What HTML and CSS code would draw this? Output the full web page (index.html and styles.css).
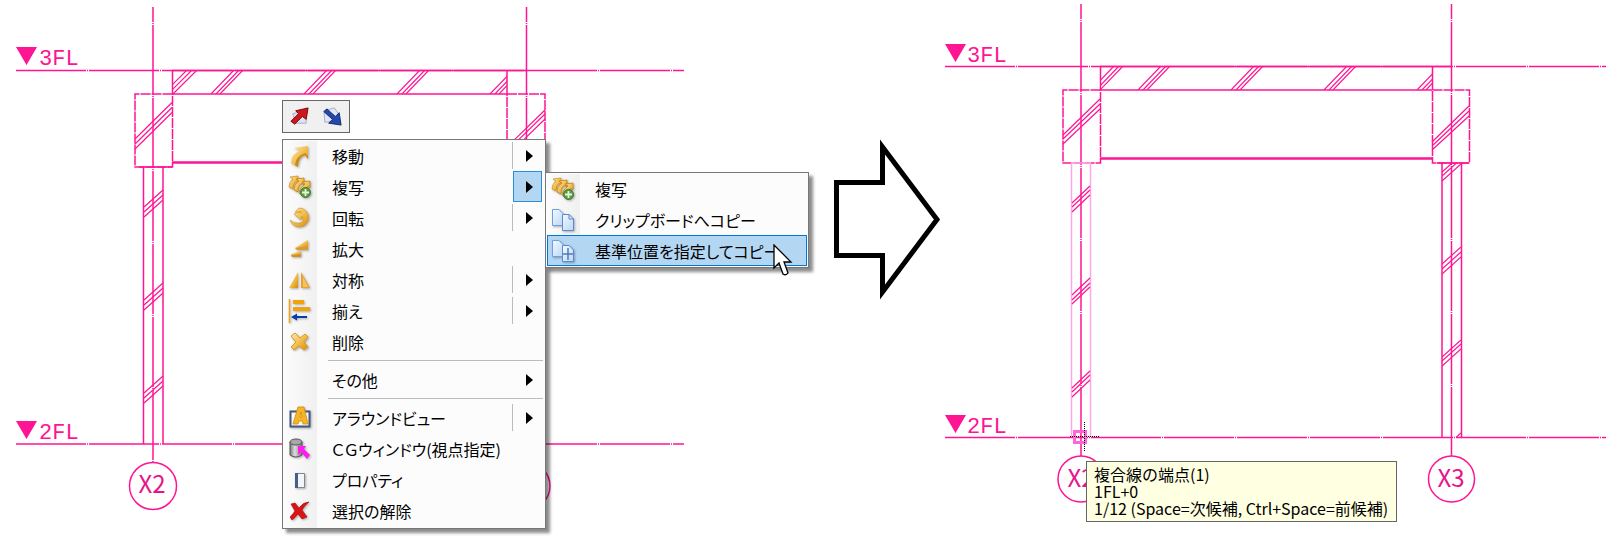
FILE: index.html
```html
<!DOCTYPE html>
<html lang="ja">
<head>
    <meta charset="UTF-8">
    <meta name="viewport" content="width=device-width, initial-scale=1.0">
    <title>基準位置を指定してコピー</title>
    <link rel="stylesheet" href="styles.css">
</head>
<body>
    <!-- shared icons -->
    <svg class="sprite" aria-hidden="true">
        <defs>
            <linearGradient id="gold" x1="0" y1="0" x2="1" y2="1">
                <stop offset="0" stop-color="#ffe9ae"/>
                <stop offset="0.5" stop-color="#f3c050"/>
                <stop offset="1" stop-color="#d88a08"/>
            </linearGradient>
            <linearGradient id="page" x1="0" y1="0" x2="1" y2="1">
                <stop offset="0" stop-color="#f4faff"/>
                <stop offset="1" stop-color="#b9d6f6"/>
            </linearGradient>
            <linearGradient id="steel" x1="0" y1="0" x2="1" y2="0">
                <stop offset="0" stop-color="#777"/>
                <stop offset="0.4" stop-color="#ddd"/>
                <stop offset="1" stop-color="#777"/>
            </linearGradient>
        </defs>
        <symbol id="i-move" viewBox="0 0 24 24">
            <path d="M6 4 20 2V15L17 11Q10 13 10 23L3 19Q3 10 12 7Z" fill="url(#gold)"/>
            <path d="M17 11Q10 13 10 23L7 21Q8 12 17 9L20 12V15Z" fill="#c98a1c"/>
        </symbol>
        <symbol id="i-copy" viewBox="0 0 24 24">
            <path d="M2 2 10 1V8L8 6.500Q5 8 5 14L1 12Q1 7 5 4Z" fill="url(#gold)" stroke="#cf8d1a" stroke-width=".7"/>
            <path d="M8 4 16 3V10L14 8.500Q10 10 10 17L6 15Q6 9 11 6Z" fill="url(#gold)" stroke="#b97608" stroke-width=".7"/>
            <path d="M14 7 22 6V13L20 11.500Q16 13 15 20L11 18Q12 12 17 9Z" fill="url(#gold)" stroke="#b97608" stroke-width=".7"/>
            <circle cx="17.500" cy="17.500" r="5" fill="#5c9a45" stroke="#3b7a2a"/>
            <path d="M17.500 14V21M14 17.500H21" stroke="#e6f7d8" stroke-width="1.800"/>
        </symbol>
        <symbol id="i-rotate" viewBox="0 0 24 24">
            <path d="M11 2A9.500 9.500 0 1 1 2 14Q6 18 11 17A4 4 0 0 0 14 10L13 14 6 8 13 5 13 7Q10 5 7 6Z" fill="url(#gold)" stroke="#cf9222" stroke-width=".6"/>
        </symbol>
        <symbol id="i-scale" viewBox="0 0 24 24">
            <path d="M7 11 20 3V12H9Z" fill="url(#gold)"/>
            <path d="M7 11 20 9V13H9Z" fill="#d99a32"/>
            <path d="M3 17 13 14V20H4Z" fill="url(#gold)"/>
            <path d="M3 18 13 17V20H4Z" fill="#d0902a"/>
        </symbol>
        <symbol id="i-mirror" viewBox="0 0 24 24">
            <path d="M10 4V20H1Z" fill="url(#gold)"/>
            <path d="M13 4 22 20H13Z" fill="#e8a22c"/>
            <path d="M15 9 20 19H15Z" fill="#f6c562"/>
        </symbol>
        <symbol id="i-align" viewBox="0 0 24 24">
            <path d="M1.500 0V24" stroke="#efa01c" stroke-width="1.500"/>
            <path d="M5 1H16V5H5ZM5 8H22V12H5Z" fill="#f0a30c"/>
            <path d="M3 18 9 14.500V17H19V19H9V21.500Z" fill="#0a3da8"/>
        </symbol>
        <symbol id="i-delete" viewBox="0 0 24 24">
            <path d="M3 6 7 3 12 8 17 4 20 7 16 12 20 17 16 20 11 16 6 20 3 17 8 12Z" fill="url(#gold)" stroke="#d99a28"/>
        </symbol>
        <symbol id="i-around" viewBox="0 0 24 24">
            <path d="M2.500 5.500H21.500V20.500H2.500Z" fill="#f5f7fb" stroke="#44567a" stroke-width="2"/>
            <path d="M10 1H16L20 18H15L14.500 15H11L10 18H5ZM12 11H14L13 6Z" fill="#f6b524" stroke="#d48a10" stroke-width=".8"/>
        </symbol>
        <symbol id="i-cg" viewBox="0 0 24 24">
            <path d="M2 5V18Q8 22 14 18V5Z" fill="url(#steel)" stroke="#555"/>
            <ellipse cx="8" cy="5" rx="6" ry="3" fill="#a8a8a8" stroke="#555"/>
            <path d="M10 9H18L16 12 22 18 19 22 13 15 10 18Z" fill="#ff1cf0"/>
        </symbol>
        <symbol id="i-prop" viewBox="0 0 24 24">
            <path d="M7.500 5.500H16.500V19.500H7.500Z" fill="#f2f5fa" stroke="#7b879c"/>
            <path d="M7 5H10V20H7Z" fill="#4a5f85"/>
        </symbol>
        <symbol id="i-clear" viewBox="0 0 24 24">
            <path d="M3 5 7 4 11 9Q15 3 21 3 16 7 14 11L19 18 14 20 10 15Q7 19 4 21L2 18Q5 15 7 12Z" fill="#dd1414" stroke="#9c0c0c" stroke-width=".6"/>
        </symbol>
        <symbol id="i-pages" viewBox="0 0 24 24">
            <path d="M1.500 1.500H8L12.500 6V17.500H1.500Z" fill="url(#page)" stroke="#6f9fdc"/>
            <path d="M11.500 6.500H18L22.500 11V22.500H11.500Z" fill="url(#page)" stroke="#5b8ad0"/>
            <path d="M18 6.500V11H22.500" fill="none" stroke="#5b8ad0"/>
        </symbol>
        <symbol id="i-pages-base" viewBox="0 0 24 24">
            <path d="M1.500 1.500H8L12.500 6V17.500H1.500Z" fill="url(#page)" stroke="#6f9fdc"/>
            <path d="M11.500 6.500H18L22.500 11V22.500H11.500Z" fill="url(#page)" stroke="#5b8ad0"/>
            <path d="M17 9V21M12 15H22" stroke="#5478b8" stroke-width="1.500"/>
        </symbol>
    </svg>

    <main class="steps">
        <section class="step">
            <svg class="drawing" viewBox="0 0 820 538" role="img" aria-label="複写前の図面">
                <defs>
                    <clipPath id="beam-a"><path d="M172 70H507V94H172Z"/></clipPath>
                </defs>
                <!-- floor and grid lines -->
                <path class="axis" d="M16 70.500H684M16 444H684"/>
                <path class="axis axis-v" d="M153 7V463M526.500 7V463"/>
                <!-- beam -->
                <path class="line" d="M172 70.500H527M172 94H507M172.500 70V94M507 70V94"/>
                <path class="line bold" d="M172 162.500H507"/>
                <path class="hatch" clip-path="url(#beam-a)" d="M163 94l24-24M168 94l24-24M173 94l24-24M211 94l23-24M216 94l23-24M220 94l23-24M304 94l23-24M309 94l23-24M313 94l23-24M397 94l23-24M402 94l23-24M406 94l23-24M490 94l23-24M495 94l23-24M499 94l23-24"/>
                <!-- capitals -->
                <path class="hidden-line" d="M172.500 94H135V167H172.500V94M507 94H545V167H507Z"/>
                <path class="hatch" d="M135 139 172 102.500M135 144 172 107.500M135 149 172 112.500M507 147 545 110M507 151 545 114M507 156 545 119"/>
                <!-- column -->
                <path class="line" d="M143.500 167V444M163 167V444M139 167H172"/>
                <path class="hatch" d="M144 207l19-17M144 212l19-17M144 217l19-17M144 300l19-17M144 305l19-17M144 310l19-17M144 393l19-17M144 398l19-17M144 403l19-17"/>
                <!-- marks -->
                <path class="mark" d="M16 47H37L26.500 65ZM16 421H37L26.500 439Z"/>
                <circle class="line" cx="153" cy="486" r="23.500"/>
                <circle class="line" cx="526.500" cy="486" r="23.500"/>
                <text class="level" x="39" y="65">3FL</text>
                <text class="level" x="39" y="439">2FL</text>
                <text class="grid-name" x="152" y="493">X2</text>
            </svg>

            <div class="mini-bar">
                <button class="mini-btn" type="button" aria-label="前へ">
                    <svg viewBox="0 0 22 22" aria-hidden="true">
                        <path d="M4 8 13 6 18 12V18H7Z" fill="#dfe4f4" stroke="#a4acc8"/>
                        <path d="M2 16 10 8 7 5 20 2 18 14 14 11 6 19Z" fill="#d0151b" stroke="#74090c"/>
                    </svg>
                </button>
                <button class="mini-btn" type="button" aria-label="後へ">
                    <svg viewBox="0 0 22 22" aria-hidden="true">
                        <path d="M2 5 13 2 17 8 14 16 3 17Z" fill="#e2e6f6" stroke="#a4acc8"/>
                        <path d="M2 6 5 3 14 11 18 7 20 20 7 18 11 14Z" fill="#2448ad" stroke="#14296c"/>
                    </svg>
                </button>
            </div>

            <ul class="menu menu-main">
                <li class="row">
                    <button class="item" type="button"><svg class="icon"><use href="#i-move"/></svg>移動</button>
                    <button class="more" type="button" aria-label="移動のメニュー"></button>
                </li>
                <li class="row">
                    <button class="item" type="button"><svg class="icon"><use href="#i-copy"/></svg>複写</button>
                    <button class="more open" type="button" aria-label="複写のメニュー"></button>
                </li>
                <li class="row">
                    <button class="item" type="button"><svg class="icon"><use href="#i-rotate"/></svg>回転</button>
                    <button class="more" type="button" aria-label="回転のメニュー"></button>
                </li>
                <li class="row">
                    <button class="item" type="button"><svg class="icon"><use href="#i-scale"/></svg>拡大</button>
                </li>
                <li class="row">
                    <button class="item" type="button"><svg class="icon"><use href="#i-mirror"/></svg>対称</button>
                    <button class="more" type="button" aria-label="対称のメニュー"></button>
                </li>
                <li class="row">
                    <button class="item" type="button"><svg class="icon"><use href="#i-align"/></svg>揃え</button>
                    <button class="more" type="button" aria-label="揃えのメニュー"></button>
                </li>
                <li class="row">
                    <button class="item" type="button"><svg class="icon"><use href="#i-delete"/></svg>削除</button>
                </li>
                <li class="sep" role="separator"></li>
                <li class="row">
                    <button class="item" type="button"><span class="icon"></span>その他</button>
                    <button class="more plain" type="button" aria-label="その他のメニュー"></button>
                </li>
                <li class="sep" role="separator"></li>
                <li class="row">
                    <button class="item" type="button"><svg class="icon"><use href="#i-around"/></svg>アラウンドビュー</button>
                    <button class="more" type="button" aria-label="アラウンドビューのメニュー"></button>
                </li>
                <li class="row">
                    <button class="item" type="button"><svg class="icon"><use href="#i-cg"/></svg>ＣＧウィンドウ(視点指定)</button>
                </li>
                <li class="row">
                    <button class="item" type="button"><svg class="icon"><use href="#i-prop"/></svg>プロパティ</button>
                </li>
                <li class="row">
                    <button class="item" type="button"><svg class="icon"><use href="#i-clear"/></svg>選択の解除</button>
                </li>
            </ul>

            <ul class="menu menu-sub">
                <li class="row">
                    <button class="item" type="button"><svg class="icon"><use href="#i-copy"/></svg>複写</button>
                </li>
                <li class="row">
                    <button class="item" type="button"><svg class="icon"><use href="#i-pages"/></svg>クリップボードへコピー</button>
                </li>
                <li class="row">
                    <button class="item selected" type="button"><svg class="icon"><use href="#i-pages-base"/></svg>基準位置を指定してコピー</button>
                </li>
            </ul>

            <svg class="pointer" viewBox="0 0 20 34" aria-hidden="true">
                <path d="M1 1V24L6 19 10 30Q13 32 15 29L11 18H18Z" fill="#fff" stroke="#000" stroke-width="1.300"/>
            </svg>
        </section>

        <svg class="next" viewBox="820 0 124 538" aria-hidden="true">
            <path d="M836.500 182.500H882.500V147L937 219.500 882.500 292V255.500H836.500Z" fill="#fff" stroke="#000" stroke-width="5"/>
        </svg>

        <section class="step">
            <svg class="drawing" viewBox="944 0 670 538" role="img" aria-label="基準位置を指定した図面">
                <defs>
                    <clipPath id="beam-b"><path d="M1100 66H1432V90H1100Z"/></clipPath>
                    <clipPath id="column-b"><path d="M1442 163H1461V437H1442Z"/></clipPath>
                </defs>
                <!-- floor and grid lines -->
                <path class="axis" d="M945 66.500H1606M945 437.500H1606"/>
                <path class="axis axis-v" d="M1081 4V456M1451.500 4V456"/>
                <!-- beam -->
                <path class="line" d="M1100 66.500H1452M1100 90H1432M1100.500 66V90M1432.500 66V90"/>
                <path class="line bold" d="M1100 158.500H1432"/>
                <path class="hatch" clip-path="url(#beam-b)" d="M1091 90l23-24M1096 90l23-24M1100 90l23-24M1138 90l23-24M1143 90l23-24M1147 90l23-24M1231 90l23-24M1236 90l23-24M1240 90l23-24M1324 90l23-24M1329 90l23-24M1333 90l23-24M1417 90l23-24M1422 90l23-24M1426 90l23-24"/>
                <!-- capitals -->
                <path class="hidden-line" d="M1100.500 90H1063V163H1100.500V90M1432.500 90H1469.500V163H1432.500V90"/>
                <path class="hatch" d="M1063 135 1100 99M1063 139 1100 104M1063 144 1100 109M1432 142 1469 106M1432 146 1469 111M1432 150 1469 116"/>
                <!-- columns, the left one is picked -->
                <path class="picked" d="M1071.500 437V163H1090.500V437"/>
                <path class="line" d="M1442 163V437M1461.500 163V437M1437 163H1469"/>
                <path class="hatch" d="M1072 203l18-17M1072 207l18-17M1072 212l18-17M1072 295l18-17M1072 300l18-17M1072 304l18-17M1072 388l18-17M1072 392l18-17M1072 397l18-17"/>
                <path class="hatch" clip-path="url(#column-b)" d="M1442 172l19-17M1442 176l19-17M1442 181l19-17M1442 264l19-17M1442 269l19-17M1442 274l19-17M1442 357l19-17M1442 361l19-17M1442 366l19-17M1442 450l19-17"/>
                <!-- marks -->
                <path class="mark" d="M945 44H966L955.500 62ZM945 415H966L955.500 433Z"/>
                <circle class="line" cx="1081" cy="479" r="23"/>
                <circle class="line" cx="1451.500" cy="479" r="23"/>
                <text class="level" x="967" y="62">3FL</text>
                <text class="level" x="967" y="433">2FL</text>
                <text class="grid-name" x="1081" y="487">X2</text>
                <text class="grid-name" x="1451" y="487">X3</text>
                <!-- snap point -->
                <path class="snap" d="M1074.500 431.500H1085.500V442.500H1074.500Z"/>
                <path class="cross" d="M1070 436.500H1099M1084.500 422V451"/>
            </svg>
            <div class="tip" role="tooltip">複合線の端点(1)<br>1FL+0<br>1/12 (Space=次候補, Ctrl+Space=前候補)</div>
        </section>
    </main>
</body>
</html>
```
FILE: styles.css
```css
body {
    margin: 0;
    background: #fff;
    color: #000;
    font-family: "Noto Sans CJK JP", sans-serif;
    font-size: 16px;
}

.sprite {
    position: absolute;
    width: 0;
    height: 0;
}

.steps {
    display: grid;
    grid-template-columns: 820fr 124fr 670fr;
}

.step {
    position: relative;
}

.drawing,
.next {
    display: block;
    width: 100%;
}

/* Drawing lines */
.axis,
.line,
.hidden-line,
.hatch,
.picked {
    fill: none;
    stroke: #ff1493;
    stroke-width: 1.5;
}

.axis {
    stroke-dasharray: 70 1 1 1;
}

.axis-v {
    stroke-dashoffset: 55;
}

.hidden-line {
    stroke-dasharray: 10 1;
}

.line.bold {
    stroke-width: 2.6;
}

.hatch {
    stroke-width: 1.2;
}

.picked {
    stroke: #ffa6ea;
}

.mark {
    fill: #ff1493;
}

.snap {
    fill: none;
    stroke: #ff66d9;
    stroke-width: 3;
}

.cross {
    stroke: #000;
    stroke-dasharray: 1 1;
}

.level {
    fill: #ff1493;
    font-family: "Liberation Mono", monospace;
    font-size: 22px;
}

.grid-name {
    fill: #e8148a;
    font-size: 24px;
    text-anchor: middle;
}

/* Small toolbar over the menu */
.mini-bar {
    position: absolute;
    top: 100px;
    left: 282px;
    display: flex;
    gap: 12px;
    padding: 5px 6px;
    background: #f0f0f0;
    border: 1px solid #666;
}

.mini-btn {
    width: 21px;
    height: 21px;
    padding: 0;
    background: none;
    border: 0;
}

.mini-btn svg {
    display: block;
}

/* Menus */
.menu {
    position: absolute;
    box-sizing: border-box;
    width: 264px;
    margin: 0;
    padding: 0 1px 1px;
    list-style: none;
    background: linear-gradient(90deg, #fcfcfc, #f0f0f0) 1px 1px / 33px 100% no-repeat #fcfcfc;
    border: 1px solid #777;
    box-shadow: 4px 4px 3px rgba(0, 0, 0, 0.45);
}

.menu-main {
    top: 139px;
    left: 282px;
    padding-bottom: 2px;
}

.menu-sub {
    top: 172px;
    left: 545px;
}

.row {
    display: flex;
    height: 31px;
}

.item {
    display: flex;
    flex: 1;
    align-items: center;
    gap: 20px;
    padding: 0 0 0 4px;
    background: none;
    border: 0;
    color: inherit;
    font: inherit;
    font-feature-settings: "palt";
    white-space: nowrap;
}

.item.selected {
    padding-left: 3px;
    background: #b3d7f3;
    border: 1px solid #0078d7;
}

.icon {
    flex: none;
    width: 24px;
    height: 24px;
    filter: drop-shadow(1px 1px 1px rgba(0, 0, 0, 0.3));
}

.more {
    position: relative;
    width: 29px;
    margin-right: 2px;
    padding: 0 0 0 12px;
    background: none;
    border: 1px solid transparent;
}

.more::after {
    content: "";
    display: block;
    width: 0;
    border: solid transparent;
    border-width: 6px 0 6px 7px;
    border-left-color: #000;
}

.more::before {
    content: "";
    position: absolute;
    top: 1px;
    bottom: 1px;
    left: -2px;
    border-left: 1px solid #bbb;
}

.more.open {
    background: #b3d7f3;
    border-color: #2a8ede;
}

.more.open::before,
.more.plain::before {
    display: none;
}

.sep {
    height: 1px;
    margin: 3px 1px 3px 44px;
    background: #bbb;
}

.pointer {
    position: absolute;
    top: 244px;
    left: 773px;
    width: 20px;
    height: 34px;
}

/* Tooltip of the snap point */
.tip {
    position: absolute;
    top: 461px;
    left: 142px;
    padding: 4px 8px 4px 7px;
    background: #ffffe1;
    border: 1px solid #666;
    line-height: 17px;
    white-space: nowrap;
}
```
